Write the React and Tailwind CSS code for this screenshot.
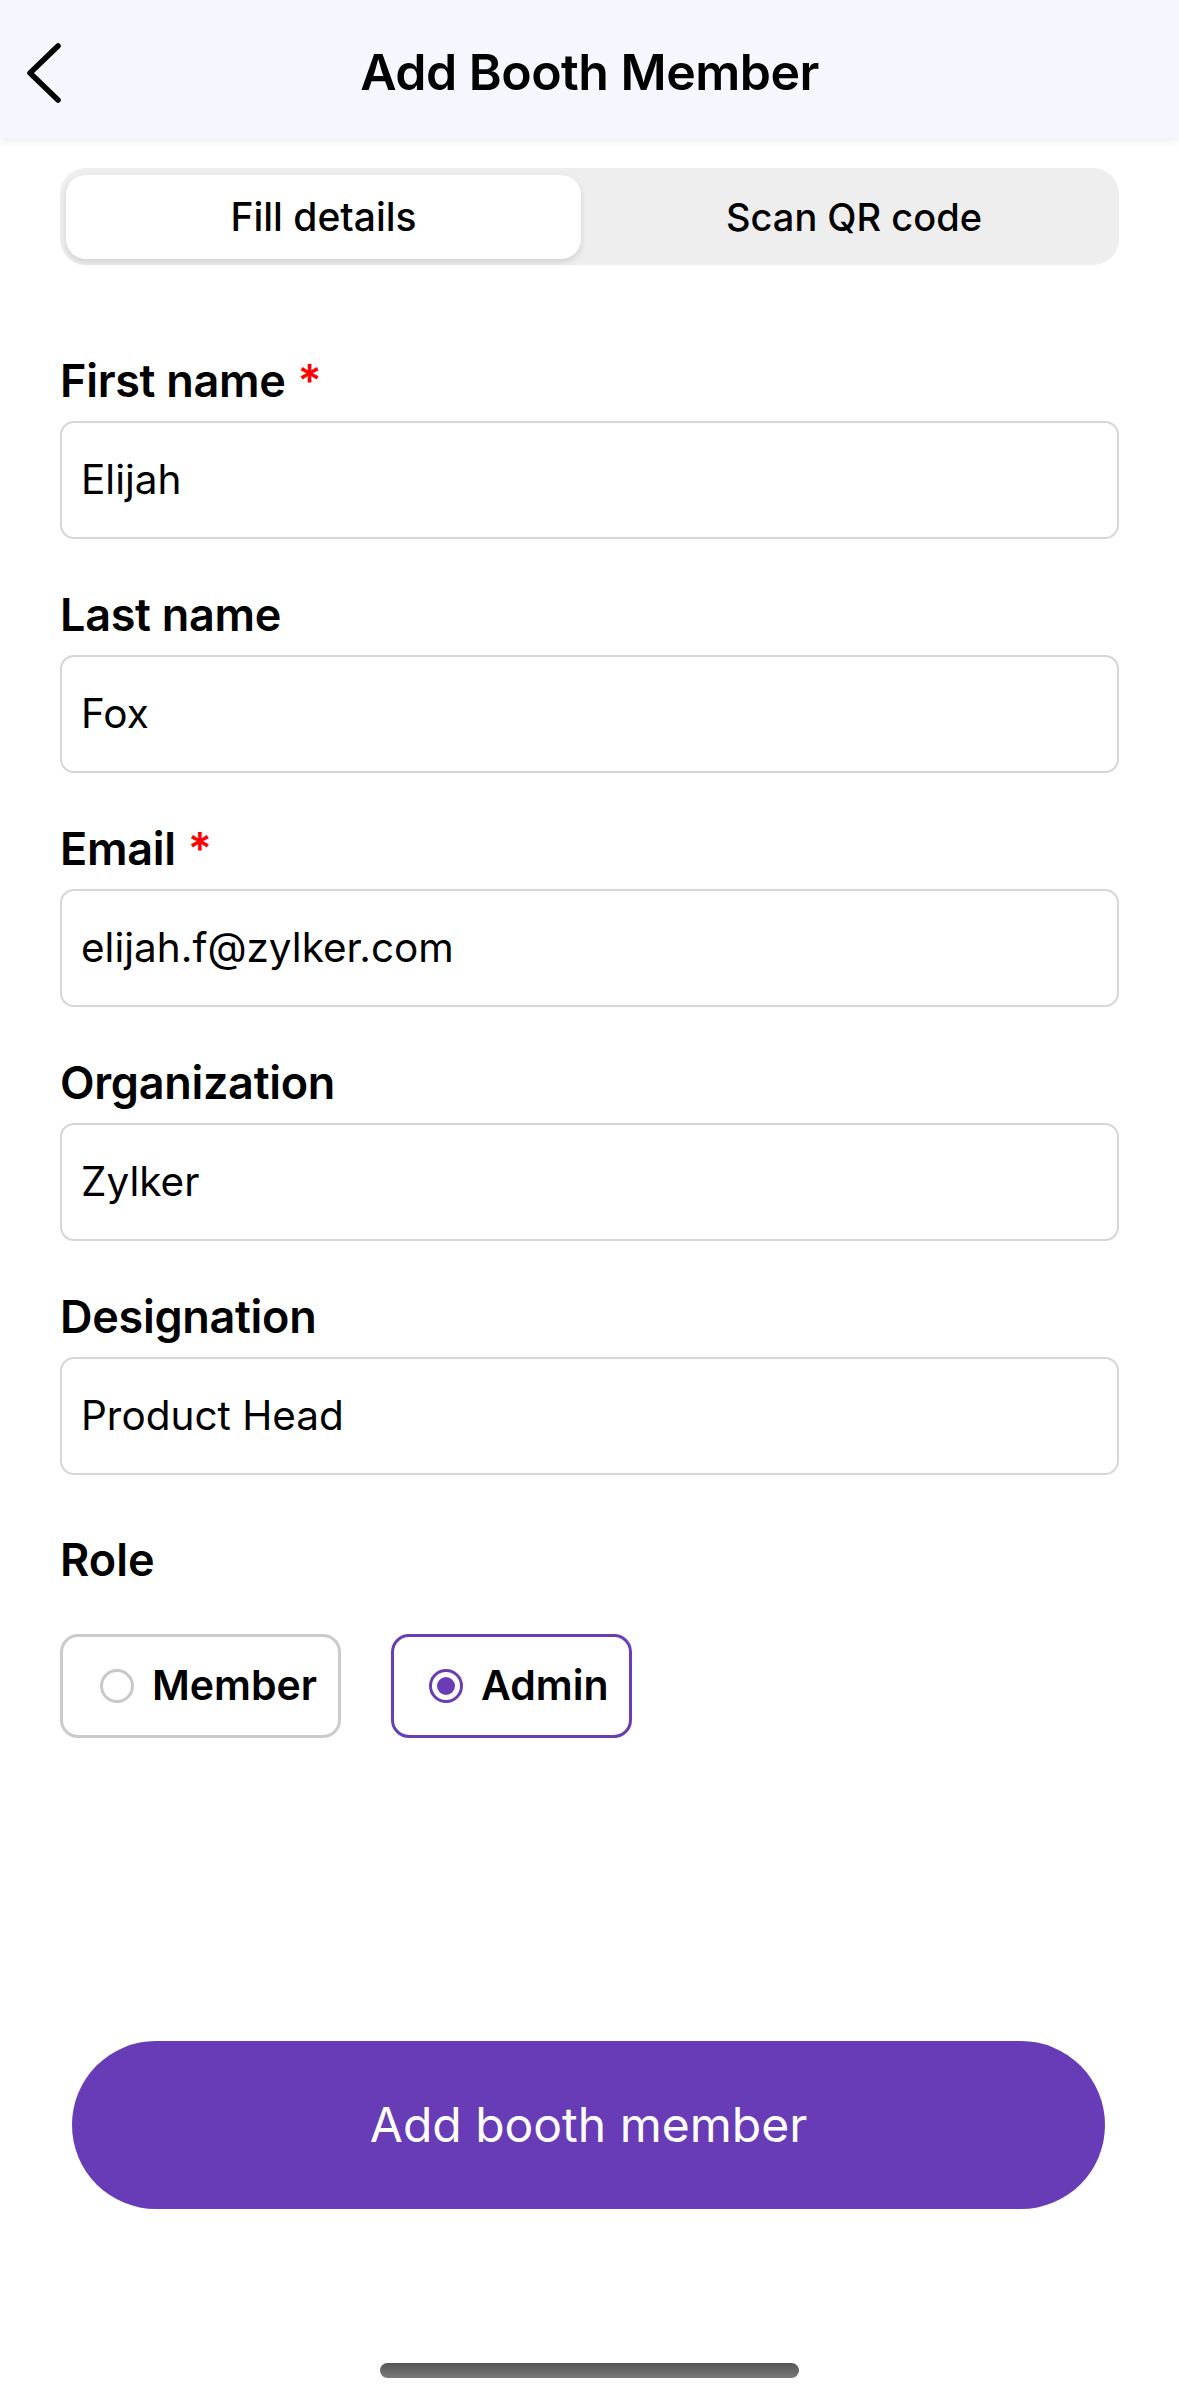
/**
 * AddBoothMember
 * Form screen for adding a booth member
 */

const fields = [
  { label: "First name", value: "Elijah", required: true },
  { label: "Last name", value: "Fox" },
  { label: "Email", value: "elijah.f@zylker.com", required: true },
  { label: "Organization", value: "Zylker" },
  { label: "Designation", value: "Product Head" },
];

const BackIcon = () => (
  <svg width="40" height="62" viewBox="0 0 40 62" fill="none">
    <path
      d="M34 4 L6 31 L34 58"
      stroke="#000"
      strokeWidth="5.5"
      strokeLinecap="round"
      strokeLinejoin="round"
    />
  </svg>
);

export default function App() {
  return (
    <div
      className="relative flex min-h-[2402px] w-full flex-col bg-white text-black"
      style={{ fontFamily: 'Inter, "Noto Sans", sans-serif' }}
    >
      {/* Header */}
      <header className="relative flex h-[138px] items-center justify-center bg-[#f6f6fe] pt-[6px] shadow-[0_3px_8px_rgba(0,0,0,0.08)]">
        <button className="absolute left-[24px] top-[42px]">
          <BackIcon />
        </button>
        <h1 className="text-[50px] font-semibold tracking-[-0.5px]">
          Add Booth Member
        </h1>
      </header>

      <main className="flex flex-col px-[60px]">
        {/* Segmented control */}
        <div className="mt-[30px] flex h-[97px] rounded-[26px] bg-[#eeeeee] p-[6px] pt-[7px]">
          <div className="flex w-[515px] items-center justify-center rounded-[20px] bg-white text-[39px] font-medium shadow-[0_3px_6px_rgba(0,0,0,0.12)]">
            Fill details
          </div>
          <div className="flex flex-1 items-center justify-center pl-[14px] text-[38px] font-medium">
            Scan QR code
          </div>
        </div>

        {/* Fields */}
        <div className="mt-[89px] flex flex-col gap-[49px]">
          {fields.map((field) => (
            <div key={field.label} className="flex flex-col">
              <label className="mb-[13px] flex h-[54px] items-center text-[45px] font-semibold tracking-[-0.3px]">
                {field.label}
                {field.required && (
                  <span className="ml-[12px] text-[#ff0000]">*</span>
                )}
              </label>
              <div className="flex h-[118px] items-center rounded-[14px] border-2 border-[#d6d6d6] px-[19px] text-[40.5px]">
                {field.value}
              </div>
            </div>
          ))}
        </div>

        {/* Role */}
        <div className="mt-[58px] flex h-[54px] items-center text-[45px] font-semibold">
          Role
        </div>
        <div className="mt-[47px] flex gap-[50px]">
          <div className="flex h-[104px] w-[281px] items-center gap-[18px] rounded-[18px] border-[3px] border-[#cbcbcb] pl-[37px]">
            <span className="h-[34px] w-[34px] rounded-full border-[3px] border-[#c8c8c8]" />
            <span className="text-[41px] font-semibold">Member</span>
          </div>
          <div className="flex h-[104px] w-[241px] items-center gap-[18px] rounded-[18px] border-[3px] border-[#6a3cb6] pl-[35px]">
            <span className="flex h-[34px] w-[34px] items-center justify-center rounded-full border-[3px] border-[#6a3cb6]">
              <span className="h-[18px] w-[18px] rounded-full bg-[#6a3cb6]" />
            </span>
            <span className="text-[41px] font-semibold">Admin</span>
          </div>
        </div>
      </main>

      {/* Submit */}
      <div className="mt-[303px] flex px-[72px] pr-[74px]">
        <button className="flex h-[168px] w-full items-center justify-center rounded-full bg-[#683bb7] text-[48px] text-white">
          Add booth member
        </button>
      </div>

      {/* Home indicator */}
      <div className="mt-[154px] flex justify-center">
        <div className="h-[15px] w-[419px] rounded-full bg-gradient-to-b from-[#555555] to-[#7a7a7a]" />
      </div>
    </div>
  );
}
